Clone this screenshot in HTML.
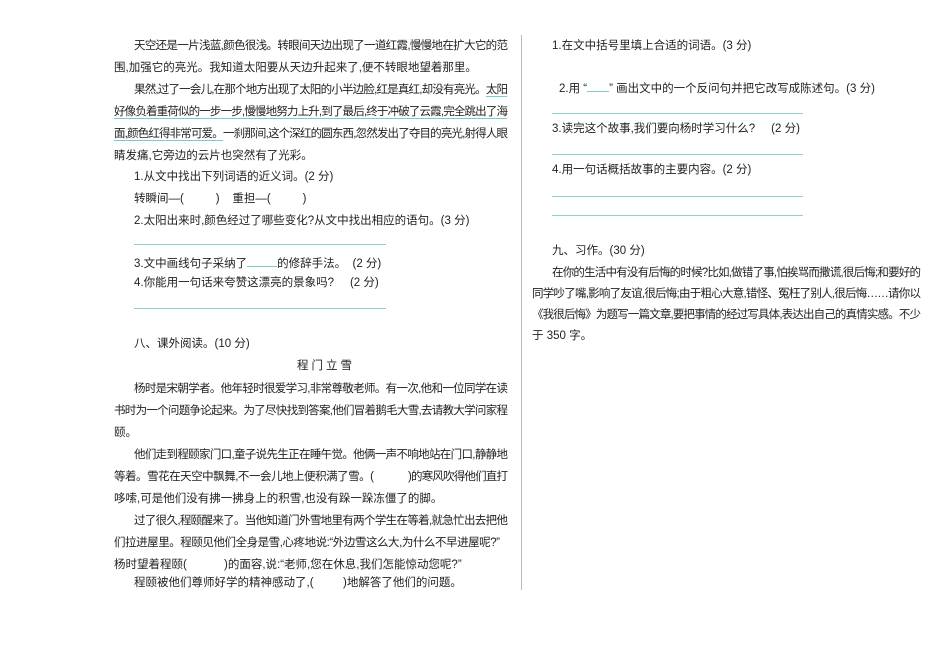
<!DOCTYPE html>
<html><head><meta charset="utf-8"><style>
body{margin:0;background:#fff;}
#p{position:relative;width:950px;height:657px;overflow:hidden;font-family:"Liberation Sans","Noto Sans CJK SC",sans-serif;font-size:11.5px;color:#222;}
.l{position:absolute;white-space:nowrap;line-height:16px;}
.u{text-decoration:underline;text-decoration-color:#7ccaca;text-underline-offset:3px;}
.h{position:absolute;height:1px;background:#8fd0d0;}
.b{display:inline-block;width:30px;border-bottom:1px solid #7ccaca;height:12px;vertical-align:baseline;}
</style></head><body><div id="p">
<div style="position:absolute;left:521px;top:35px;width:1px;height:555px;background:#bbb"></div>

<div class="l j" data-w="374" style="left:134px;top:38px">天空还是一片浅蓝,颜色很浅。转眼间天边出现了一道红霞,慢慢地在扩大它的范</div>
<div class="l" style="left:114px;top:60px">围,加强它的亮光。我知道太阳要从天边升起来了,便不转眼地望着那里。</div>
<div class="l j" data-w="374" style="left:134px;top:82px">果然,过了一会儿,在那个地方出现了太阳的小半边脸,红是真红,却没有亮光。<span class="u">太阳</span></div>
<div class="l j u" data-w="394" style="left:114px;top:104px">好像负着重荷似的一步一步,慢慢地努力上升,到了最后,终于冲破了云霞,完全跳出了海</div>
<div class="l j" data-w="394" style="left:114px;top:126px"><span class="u">面,颜色红得非常可爱。</span>一刹那间,这个深红的圆东西,忽然发出了夺目的亮光,射得人眼</div>
<div class="l" style="left:114px;top:148px">睛发痛,它旁边的云片也突然有了光彩。</div>
<div class="l" style="left:134px;top:169px">1.从文中找出下列词语的近义词。(2 分)</div>
<div class="l" style="left:134px;top:191px">转瞬间—(&nbsp;&nbsp;&nbsp;&nbsp;&nbsp;&nbsp;&nbsp;&nbsp;&nbsp;&nbsp;)&nbsp;&nbsp;&nbsp;&nbsp;重担—(&nbsp;&nbsp;&nbsp;&nbsp;&nbsp;&nbsp;&nbsp;&nbsp;&nbsp;&nbsp;)</div>
<div class="l" style="left:134px;top:213px">2.太阳出来时,颜色经过了哪些变化?从文中找出相应的语句。(3 分)</div>
<div class="h" style="left:134px;top:244px;width:252px"></div>
<div class="l" style="left:134px;top:254px">3.文中画线句子采纳了<span class="b"></span>的修辞手法。&nbsp;&nbsp;(2 分)</div>
<div class="l" style="left:134px;top:275px">4.你能用一句话来夸赞这漂亮的景象吗?&nbsp;&nbsp;&nbsp;&nbsp;&nbsp;(2 分)</div>
<div class="h" style="left:134px;top:308px;width:252px"></div>

<div class="l" style="left:134px;top:336px">八、课外阅读。(10 分)</div>
<div class="l" style="left:297px;top:358px;letter-spacing:3px">程门立雪</div>
<div class="l j" data-w="374" style="left:134px;top:381px">杨时是宋朝学者。他年轻时很爱学习,非常尊敬老师。有一次,他和一位同学在读</div>
<div class="l j" data-w="394" style="left:114px;top:403px">书时为一个问题争论起来。为了尽快找到答案,他们冒着鹅毛大雪,去请教大学问家程</div>
<div class="l" style="left:114px;top:425px">颐。</div>
<div class="l j" data-w="374" style="left:134px;top:447px">他们走到程颐家门口,童子说先生正在睡午觉。他俩一声不响地站在门口,静静地</div>
<div class="l j" data-w="260" style="left:114px;top:469px">等着。雪花在天空中飘舞,不一会儿地上便积满了雪。(</div>
<div class="l j" data-w="100" style="left:408px;top:469px">)的寒风吹得他们直打</div>
<div class="l" style="left:114px;top:491px">哆嗦,可是他们没有拂一拂身上的积雪,也没有跺一跺冻僵了的脚。</div>
<div class="l j" data-w="374" style="left:134px;top:513px">过了很久,程颐醒来了。当他知道门外雪地里有两个学生在等着,就急忙出去把他</div>
<div class="l j" data-w="386" style="left:114px;top:535px">们拉进屋里。程颐见他们全身是雪,心疼地说:“外边雪这么大,为什么不早进屋呢?”</div>
<div class="l" style="left:114px;top:557px">杨时望着程颐(</div>
<div class="l" style="left:224px;top:557px">)的面容,说:“老师,您在休息,我们怎能惊动您呢?”</div>
<div class="l" style="left:134px;top:575px">程颐被他们尊师好学的精神感动了,(</div>
<div class="l" style="left:343px;top:575px">)地解答了他们的问题。</div>

<div class="l" style="left:552px;top:38px">1.在文中括号里填上合适的词语。(3 分)</div>
<div class="l" style="left:559px;top:79px">2.用 “<span class="b" style="width:22px"></span>” 画出文中的一个反问句并把它改写成陈述句。(3 分)</div>
<div class="h" style="left:552px;top:113px;width:251px"></div>
<div class="l" style="left:552px;top:121px">3.读完这个故事,我们要向杨时学习什么?&nbsp;&nbsp;&nbsp;&nbsp;&nbsp;(2 分)</div>
<div class="h" style="left:552px;top:154px;width:251px"></div>
<div class="l" style="left:552px;top:162px">4.用一句话概括故事的主要内容。(2 分)</div>
<div class="h" style="left:552px;top:196px;width:251px"></div>
<div class="h" style="left:552px;top:215px;width:251px"></div>
<div class="l" style="left:552px;top:243px">九、习作。(30 分)</div>
<div class="l j" data-w="369" style="left:552px;top:265px">在你的生活中有没有后悔的时候?比如,做错了事,怕挨骂而撒谎,很后悔;和要好的</div>
<div class="l j" data-w="389" style="left:532px;top:286px">同学吵了嘴,影响了友谊,很后悔;由于粗心大意,错怪、冤枉了别人,很后悔……请你以</div>
<div class="l j" data-w="389" style="left:532px;top:307px">《我很后悔》为题写一篇文章,要把事情的经过写具体,表达出自己的真情实感。不少</div>
<div class="l" style="left:532px;top:328px">于 350 字。</div>
</div>
<script>
document.querySelectorAll('.j').forEach(function(e){
  var target=parseFloat(e.getAttribute('data-w'));
  var w=e.getBoundingClientRect().width;
  var n=e.textContent.length;
  if(n>1){var ls=(target-w)/(n-1);e.style.letterSpacing=ls+'px';}
});
</script>
</body></html>
